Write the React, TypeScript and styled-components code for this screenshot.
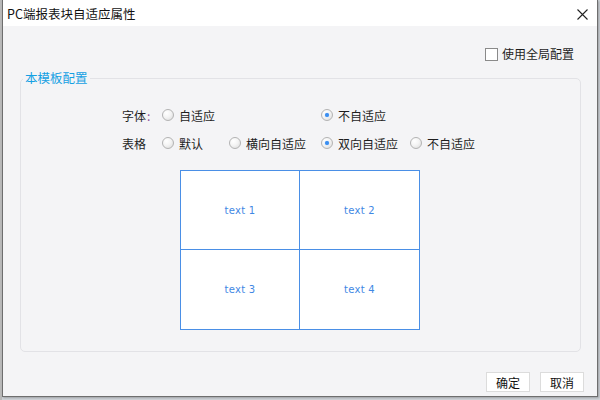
import React, { useState } from "react";
import styled, { createGlobalStyle } from "styled-components";

const GlobalStyle = createGlobalStyle`
  html, body { margin: 0; padding: 0; }
  body {
    width: 600px;
    height: 400px;
    overflow: hidden;
    background: #b9b9b9;
    font-family: "Noto Sans CJK SC", "Liberation Sans", sans-serif;
    font-size: 12px;
    color: #1e1e1e;
  }
`;

const Page = styled.div`
  width: 600px;
  height: 400px;
  display: flex;
  flex-direction: column;
  background: linear-gradient(#b9b9b9, #b9b9b9) 0 0 / 2px 100% no-repeat, #cfd3d8;
`;

const Window = styled.div`
  margin-left: 2px;
  width: 596px;
  height: 397px;
  box-sizing: border-box;
  border: 1px solid #6e6e6e;
  border-top: none;
  display: flex;
  flex-direction: column;
  background: #f4f4f6;
  box-shadow: 1px 1px 2px rgba(0, 0, 0, 0.25);
`;

const TitleBar = styled.div`
  height: 26px;
  flex: none;
  background: #ffffff;
  display: flex;
  align-items: center;
  justify-content: space-between;
  padding: 0 9px 0 4px;
`;

const Title = styled.div`
  font-size: 12.5px;
  line-height: 16px;
  margin-top: 1px;
  color: #111;
`;

const CloseButton = styled.button`
  border: none;
  background: transparent;
  padding: 0;
  width: 12px;
  height: 12px;
  margin-top: 2px;
  display: flex;
  align-items: center;
  justify-content: center;
  cursor: pointer;
`;

const Body = styled.div`
  flex: 1;
  display: flex;
  flex-direction: column;
  padding: 20px 13px 4px 17px;
`;

const TopRow = styled.div`
  display: flex;
  justify-content: flex-end;
  padding-right: 10px;
  height: 16px;
`;

const CheckLabel = styled.label`
  display: flex;
  align-items: center;
  gap: 4px;
  line-height: 16px;
  cursor: pointer;
`;

const CheckBox = styled.span`
  width: 11px;
  height: 11px;
  border: 1px solid #8a8a8a;
  background: #fff;
  display: inline-block;
`;

const Group = styled.fieldset`
  margin: 8px 3px 0 0;
  padding: 19px 0 0 0;
  height: 282px;
  box-sizing: border-box;
  border: 1px solid #e2e2e6;
  border-radius: 5px;
  min-width: 0;
`;

const Legend = styled.legend`
  color: #14a0e3;
  font-size: 12.5px;
  line-height: 16px;
  padding: 0 2px;
  margin-left: 2px;
`;

const Options = styled.div`
  display: grid;
  grid-template-columns: 40px 67px 92px 89px auto;
  grid-auto-rows: 20px;
  row-gap: 8px;
  margin-left: 101px;
`;

const RowLabel = styled.div<{ $row: number }>`
  grid-column: 1;
  grid-row: ${(p) => p.$row};
  display: flex;
  align-items: center;
`;

const Colon = styled.span`
  color: #8a4a9a;
  margin-left: 1px;
`;

const RadioItem = styled.label<{ $row: number; $col: number }>`
  grid-row: ${(p) => p.$row};
  grid-column: ${(p) => p.$col};
  display: flex;
  align-items: center;
  gap: 5px;
  cursor: pointer;
  white-space: nowrap;
`;

const RadioDot = styled.span<{ $on: boolean }>`
  width: 10px;
  height: 10px;
  border-radius: 50%;
  border: 1px solid #b3b3b3;
  background: radial-gradient(circle at 35% 30%, #ffffff 0%, #f4f4f4 45%, #d9d9d9 100%);
  display: inline-flex;
  align-items: center;
  justify-content: center;
  flex: none;

  &::after {
    content: "";
    width: 4px;
    height: 4px;
    border-radius: 50%;
    background: ${(p) => (p.$on ? "#3a8ef0" : "transparent")};
    box-shadow: ${(p) => (p.$on ? "0 0 1px #6aaaf5" : "none")};
  }
`;

const Preview = styled.div`
  margin: 17px 0 0 159px;
  width: 240px;
  height: 160px;
  box-sizing: border-box;
  border: 1px solid #4a8fe6;
  display: grid;
  grid-template-columns: 1fr 1fr;
  grid-template-rows: 1fr 1fr;
  background: #fff;
`;

const Cell = styled.div<{ $right: boolean; $bottom: boolean }>`
  display: flex;
  align-items: center;
  justify-content: center;
  border-right: ${(p) => (p.$right ? "1px solid #4a8fe6" : "none")};
  border-bottom: ${(p) => (p.$bottom ? "1px solid #4a8fe6" : "none")};
  color: #3f88e4;
  font-family: "DejaVu Sans", "Liberation Sans", sans-serif;
  font-size: 10px;
  letter-spacing: 0.3px;
`;

const Footer = styled.div`
  margin-top: auto;
  display: flex;
  justify-content: flex-end;
  gap: 10px;
`;

const Button = styled.button`
  width: 44px;
  height: 20px;
  box-sizing: border-box;
  border: 1px solid #dcdcdc;
  background: #ffffff;
  font-family: "Noto Sans CJK SC", "Liberation Sans", sans-serif;
  font-size: 12px;
  color: #111;
  padding: 0;
  cursor: pointer;
`;

type Opt = { label: string; col: number };

const fontOpts: Opt[] = [
  { label: "自适应", col: 2 },
  { label: "不自适应", col: 4 },
];
const tableOpts: Opt[] = [
  { label: "默认", col: 2 },
  { label: "横向自适应", col: 3 },
  { label: "双向自适应", col: 4 },
  { label: "不自适应", col: 5 },
];

export default function App() {
  const [font, setFont] = useState("不自适应");
  const [table, setTable] = useState("双向自适应");
  return (
    <>
      <GlobalStyle />
      <Page>
        <Window>
          <TitleBar>
            <Title>PC端报表块自适应属性</Title>
            <CloseButton aria-label="关闭">
              <svg width="11" height="11" viewBox="0 0 11 11">
                <path d="M0.5 0.5 L10.5 10.5 M10.5 0.5 L0.5 10.5" stroke="#222" strokeWidth="1.1" />
              </svg>
            </CloseButton>
          </TitleBar>
          <Body>
            <TopRow>
              <CheckLabel>
                <CheckBox />
                使用全局配置
              </CheckLabel>
            </TopRow>
            <Group>
              <Legend>本模板配置</Legend>
              <Options>
                <RowLabel $row={1}>
                  字体<Colon>:</Colon>
                </RowLabel>
                {fontOpts.map((o) => (
                  <RadioItem key={o.label} $row={1} $col={o.col} onClick={() => setFont(o.label)}>
                    <RadioDot $on={font === o.label} />
                    {o.label}
                  </RadioItem>
                ))}
                <RowLabel $row={2}>表格</RowLabel>
                {tableOpts.map((o) => (
                  <RadioItem key={o.label} $row={2} $col={o.col} onClick={() => setTable(o.label)}>
                    <RadioDot $on={table === o.label} />
                    {o.label}
                  </RadioItem>
                ))}
              </Options>
              <Preview>
                {["text 1", "text 2", "text 3", "text 4"].map((t, i) => (
                  <Cell key={t} $right={i % 2 === 0} $bottom={i < 2}>
                    {t}
                  </Cell>
                ))}
              </Preview>
            </Group>
            <Footer>
              <Button>确定</Button>
              <Button>取消</Button>
            </Footer>
          </Body>
        </Window>
      </Page>
    </>
  );
}
